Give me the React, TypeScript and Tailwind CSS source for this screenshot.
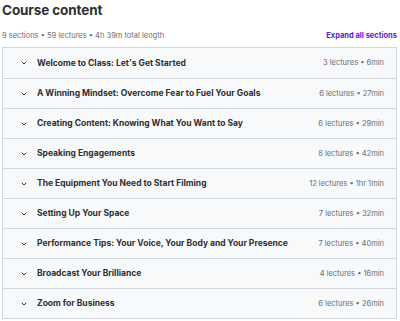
const sections = [
  { title: "Welcome to Class: Let's Get Started", meta: "3 lectures • 6min" },
  { title: "A Winning Mindset: Overcome Fear to Fuel Your Goals", meta: "6 lectures • 27min" },
  { title: "Creating Content: Knowing What You Want to Say", meta: "6 lectures • 29min" },
  { title: "Speaking Engagements", meta: "8 lectures • 42min" },
  { title: "The Equipment You Need to Start Filming", meta: "12 lectures • 1hr 1min" },
  { title: "Setting Up Your Space", meta: "7 lectures • 32min" },
  { title: "Performance Tips: Your Voice, Your Body and Your Presence", meta: "7 lectures • 40min" },
  { title: "Broadcast Your Brilliance", meta: "4 lectures • 16min" },
  { title: "Zoom for Business", meta: "6 lectures • 26min" },
];

const Chevron = () => (
  <svg width="6" height="6" viewBox="0 0 24 24" fill="none" stroke="#2d2f31" strokeWidth="4" strokeLinecap="round" strokeLinejoin="round">
    <path d="M4 8l8 8 8-8" />
  </svg>
);

const App = () => {
  return (
    <div className="w-[400px] h-[321px] bg-white px-[2px] font-['Inter',sans-serif] text-[#2d2f31]">
      <h2 className="pt-[1px] text-[13.5px] font-bold leading-[18px] tracking-[-0.1px]">Course content</h2>
      <div className="mt-[10px] flex items-center justify-between h-[14px]">
        <span className="text-[7.5px] text-[#6a6f73]">9 sections • 59 lectures • 4h 39m total length</span>
        <span className="text-[7.5px] font-bold text-[#5624d0] pr-[1px]">Expand all sections</span>
      </div>
      <div className="mt-[4px] w-[395px] border border-[#d1d7dc]">
        {sections.map(({ title, meta }, i) => (
          <div
            key={`sec${i}`}
            className={`flex h-[30px] items-center bg-[#f7f9fa] pl-[18px] pr-[12px] ${
              i > 0 ? "border-t border-[#d1d7dc]" : ""
            }`}
          >
            <Chevron />
            <span className="ml-[10px] grow text-[8.5px] font-bold">{title}</span>
            <span className="text-[7.5px] text-[#6a6f73]">{meta}</span>
          </div>
        ))}
      </div>
    </div>
  );
};

export default App;
